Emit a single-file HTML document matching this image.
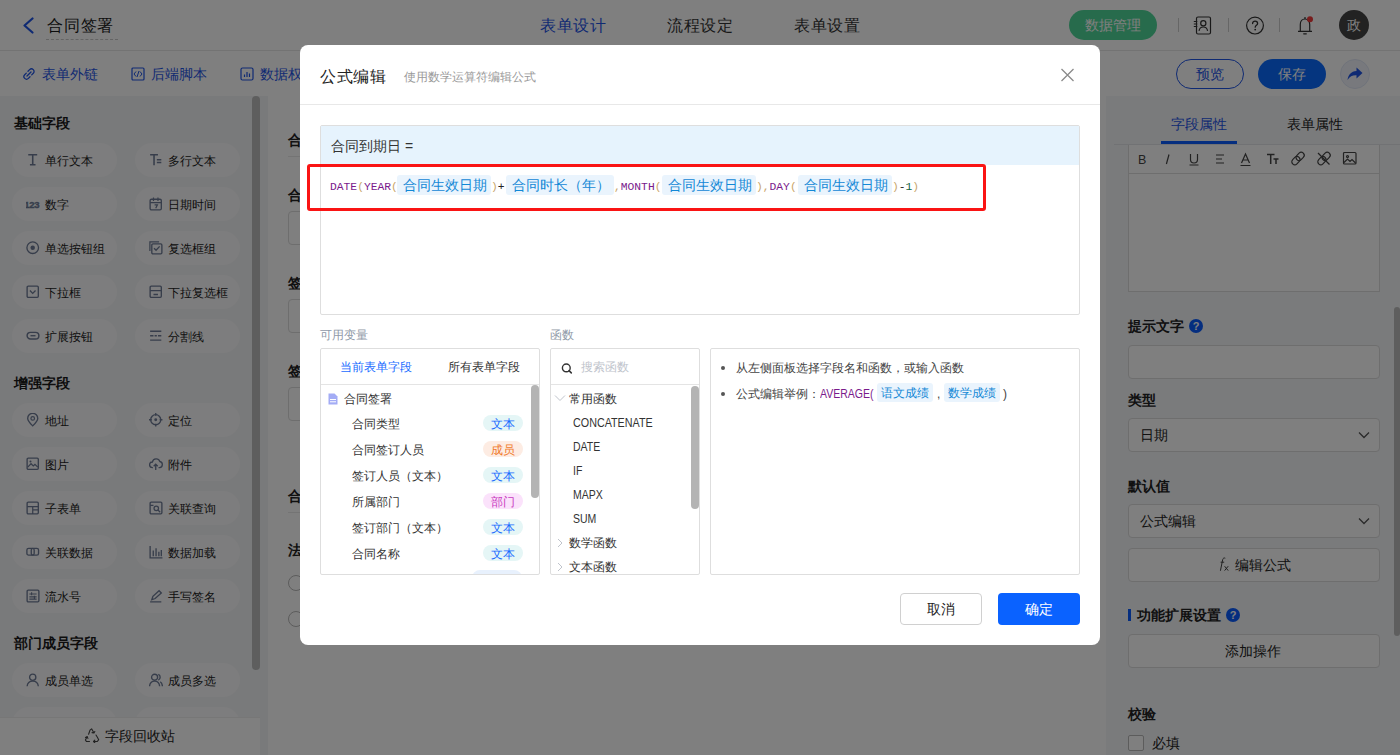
<!DOCTYPE html>
<html><head><meta charset="utf-8">
<style>
*{box-sizing:border-box;margin:0;padding:0}
html,body{width:1400px;height:755px;overflow:hidden;background:#fff}
body{position:relative;font-family:"Liberation Sans",sans-serif;color:#222;font-size:14px}
.a{position:absolute;white-space:nowrap}
svg{display:block}
/* background app */
#hdr{left:0;top:0;width:1400px;height:51px;background:#fff;border-bottom:1px solid #e6e6e6}
#tb{left:0;top:51px;width:1400px;height:45px;background:#fff}
#lp{left:0;top:96px;width:268px;height:659px;background:#f3f4f7}
#cv{left:268px;top:96px;width:838px;height:659px;background:#fff}
#rp{left:1106px;top:96px;width:294px;height:659px;background:#f4f6f9}
.sec{font-size:14px;font-weight:bold;color:#1a1a1a;line-height:20px}
.pill{width:105px;height:34px;border-radius:17px;background:#fbfbfc}
.pill .ic{position:absolute;left:14px;top:10px;width:14px;height:14px}
.pill .t{position:absolute;left:33px;top:9px;font-size:12px;line-height:18px;color:#222}
#mask{left:0;top:0;width:1400px;height:755px;background:rgba(0,0,0,.5)}
/* modal */
#modal{left:300px;top:45px;width:800px;height:600px;background:#fff;border-radius:8px}
.fn{color:#7a1a8c}.br{color:#c9a56a}.op{color:#222}.num{color:#116644}
.tag{height:20px;background:#eaf4fd;color:#1388d6;font-size:14px;line-height:20px;padding-left:6px;border-radius:3px}
.tag2{height:19px;background:#eaf4fd;color:#1388d6;font-size:12px;line-height:21px;text-align:center;border-radius:3px}
.badge{width:40px;height:16px;border-radius:8px;font-size:12px;line-height:18px;text-align:center}
.bt{background:#e5f6f6;color:#1a6cff}.bm{background:#fdece3;color:#f07a2a}.bd{background:#fbe2fb;color:#c93bc0}
</style></head>
<body>
<div id="hdr" class="a"></div>
<div id="tb" class="a"></div>
<div id="lp" class="a"></div>
<div id="cv" class="a"></div>
<div id="rp" class="a"></div>

<!-- header -->
<svg class="a" style="left:21px;top:17px" width="14" height="17" viewBox="0 0 14 17"><path d="M11.5 1.5 L3.5 8.5 L11.5 15.5" fill="none" stroke="#1f55e6" stroke-width="2.2" stroke-linecap="round" stroke-linejoin="round"/></svg>
<div class="a" style="left:47px;top:14px;font-size:16px;line-height:24px;color:#1a1a1a;letter-spacing:0.8px">合同签署</div>
<div class="a" style="left:46px;top:39px;width:72px;height:0;border-top:1px dashed #c8c8c8"></div>
<div class="a" style="left:540px;top:14px;font-size:16px;line-height:24px;color:#1f55e6;letter-spacing:0.5px">表单设计</div>
<div class="a" style="left:667px;top:14px;font-size:16px;line-height:24px;color:#333;letter-spacing:0.5px">流程设定</div>
<div class="a" style="left:794px;top:14px;font-size:16px;line-height:24px;color:#333;letter-spacing:0.5px">表单设置</div>
<div class="a" style="left:1069px;top:10px;width:88px;height:30px;border-radius:15px;background:#4fd699;color:#fff;font-size:14px;line-height:30px;text-align:center">数据管理</div>
<div class="a" style="left:1178px;top:18px;width:1px;height:14px;background:#ccc"></div>
<div class="a" style="left:1228px;top:18px;width:1px;height:14px;background:#ccc"></div>
<div class="a" style="left:1279px;top:18px;width:1px;height:14px;background:#ccc"></div>
<svg class="a" style="left:1192px;top:16px" width="20" height="19" viewBox="0 0 20 19"><rect x="4.5" y="1" width="14" height="17" rx="1.5" fill="none" stroke="#333" stroke-width="1.2"/><circle cx="11.3" cy="7.3" r="2.6" fill="none" stroke="#333" stroke-width="1.2"/><path d="M7 14.8c.5-2.6 2.1-3.8 4.3-3.8s3.8 1.2 4.3 3.8" fill="none" stroke="#333" stroke-width="1.2"/><path d="M1.8 5.5h3.5M1.8 8h3.5M1.8 10.5h3.5" stroke="#333" stroke-width="1.1"/></svg>
<svg class="a" style="left:1245px;top:16px" width="20" height="20" viewBox="0 0 20 20"><circle cx="10" cy="9.6" r="8.4" fill="none" stroke="#333" stroke-width="1.2"/><path d="M7.6 7.6c0-1.5 1.1-2.5 2.5-2.5s2.5 1 2.5 2.3c0 1.8-2.4 2-2.4 3.8" fill="none" stroke="#333" stroke-width="1.3" stroke-linecap="round"/><circle cx="10.2" cy="13.6" r="0.9" fill="#333"/></svg>
<svg class="a" style="left:1296px;top:15px" width="18" height="20" viewBox="0 0 18 20"><path d="M4.3 16V9.5C4.3 6.2 6.3 4 9 4s4.7 2.2 4.7 5.5V16M2 16.3h14" fill="none" stroke="#333" stroke-width="1.2" stroke-linejoin="round"/><path d="M7.7 18.8h2.6" stroke="#333" stroke-width="1.2" stroke-linecap="round"/><path d="M9 2v2" stroke="#333" stroke-width="1.2"/><circle cx="14" cy="4.3" r="3" fill="#f03a3a"/></svg>
<div class="a" style="left:1339px;top:10px;width:30px;height:30px;border-radius:15px;background:#444;color:#fff;font-size:14px;line-height:30px;text-align:center">政</div>

<!-- toolbar -->
<svg class="a" style="left:22px;top:67px" width="14" height="14" viewBox="0 0 14 14"><path d="M6 4.2l1.6-1.6a2.6 2.6 0 0 1 3.7 3.7L9.7 7.9M8 9.8l-1.6 1.6a2.6 2.6 0 0 1-3.7-3.7L4.3 6.1M5 9l4-4" fill="none" stroke="#1f55e6" stroke-width="1.3" stroke-linecap="round"/></svg>
<div class="a" style="left:42px;top:64px;font-size:14px;line-height:20px;color:#1f55e6">表单外链</div>
<svg class="a" style="left:131px;top:67px" width="14" height="14" viewBox="0 0 14 14"><rect x="1" y="1" width="12" height="12" rx="1" fill="none" stroke="#1f55e6" stroke-width="1.2"/><path d="M5 4.5L3 7l2 2.5M9 4.5L11 7 9 9.5M8 4L6 10" fill="none" stroke="#1f55e6" stroke-width="1"/></svg>
<div class="a" style="left:151px;top:64px;font-size:14px;line-height:20px;color:#1f55e6">后端脚本</div>
<svg class="a" style="left:240px;top:67px" width="14" height="14" viewBox="0 0 14 14"><rect x="1" y="1" width="12" height="12" rx="1.5" fill="none" stroke="#1f55e6" stroke-width="1.2"/><path d="M4.5 7.5v2.5M7 5v5M9.5 6.5v3.5" stroke="#1f55e6" stroke-width="1.2"/></svg>
<div class="a" style="left:260px;top:64px;font-size:14px;line-height:20px;color:#1f55e6">数据权限</div>
<div class="a" style="left:1176px;top:59px;width:68px;height:30px;border-radius:15px;border:1px solid #1f55e6;color:#1f55e6;font-size:14px;line-height:28px;text-align:center">预览</div>
<div class="a" style="left:1258px;top:59px;width:68px;height:30px;border-radius:15px;background:#0a6aff;color:#fff;font-size:14px;line-height:30px;text-align:center">保存</div>
<div class="a" style="left:1340px;top:59px;width:30px;height:30px;border-radius:15px;background:#f0f3fb;border:1px solid #e0e6f5"></div>
<svg class="a" style="left:1346px;top:66px" width="18" height="16" viewBox="0 0 18 16"><path d="M10.5 1.5L16.5 7l-6 5.5V9.2C6.5 9 4 10.3 1.5 14 2.2 8.6 5 5.4 10.5 4.9z" fill="#1f55e6"/></svg>



<!-- canvas form -->
<div class="a" style="left:288px;top:130px;font-size:14px;line-height:20px;font-weight:bold;color:#222">合同基本信息</div>
<div class="a" style="left:288px;top:156px;width:800px;height:1px;background:#e8e8e8"></div>
<div class="a" style="left:288px;top:185px;font-size:14px;line-height:20px;font-weight:bold;color:#222">合同名称</div>
<div class="a" style="left:288px;top:211px;width:790px;height:34px;border:1px solid #dcdcdc;border-radius:4px"></div>
<div class="a" style="left:288px;top:273px;font-size:14px;line-height:20px;font-weight:bold;color:#222">签订人员</div>
<div class="a" style="left:288px;top:299px;width:790px;height:34px;border:1px solid #dcdcdc;border-radius:4px"></div>
<div class="a" style="left:288px;top:361px;font-size:14px;line-height:20px;font-weight:bold;color:#222">签订部门</div>
<div class="a" style="left:288px;top:387px;width:790px;height:34px;border:1px solid #dcdcdc;border-radius:4px"></div>
<div class="a" style="left:288px;top:486px;font-size:14px;line-height:20px;font-weight:bold;color:#222">合同内容</div>
<div class="a" style="left:288px;top:512px;width:800px;height:1px;background:#e8e8e8"></div>
<div class="a" style="left:288px;top:540px;font-size:14px;line-height:20px;font-weight:bold;color:#222">法务审核</div>
<div class="a" style="left:288px;top:575px;width:16px;height:16px;border:1px solid #b8b8b8;border-radius:50%"></div>
<div class="a" style="left:288px;top:611px;width:16px;height:16px;border:1px solid #b8b8b8;border-radius:50%"></div>

<!-- right panel -->
<div class="a" style="left:1114px;top:144px;width:286px;height:1px;background:#e2e4e8"></div>
<div class="a" style="left:1171px;top:114px;font-size:14px;line-height:20px;color:#1f55e6">字段属性</div>
<div class="a" style="left:1161px;top:141px;width:76px;height:3px;background:#0a5cff"></div>
<div class="a" style="left:1287px;top:114px;font-size:14px;line-height:20px;color:#222">表单属性</div>
<div class="a" style="left:1128px;top:145px;width:252px;height:147px;border:1px solid #dcdcdc;border-top:none;border-radius:0;background:#fff"></div>
<div class="a" style="left:1129px;top:173px;width:250px;height:1px;background:#dcdcdc"></div>
<svg class="a" style="left:1132px;top:150px" width="240" height="18" viewBox="0 0 240 18">
<g fill="none" stroke="#444" stroke-width="1.2">
<text x="6" y="13.5" font-family="Liberation Sans" font-size="12.5" fill="#444" stroke="none">B</text>
<path d="M37 4.5l-2.6 9.5"/>
<path d="M58.5 4v5.5a3.5 3.5 0 0 0 7 0V4M57.5 15h9"/>
<path d="M84 5h8M84 9h6M84 13h8"/>
<path d="M109.5 13l4-9 4 9M111 10h5M108.5 15.5h10"/>
<path d="M135 4.5h7.5M138.7 4.5v9.5M141.5 9h5M144 9v5" stroke-width="1.5"/>
<g transform="rotate(-45 166 8.5)"><rect x="158.5" y="5.5" width="9" height="6" rx="3"/><rect x="164.5" y="5.5" width="9" height="6" rx="3"/></g>
<g transform="rotate(-45 192 8.5)"><rect x="184.5" y="5.5" width="9" height="6" rx="3"/><rect x="190.5" y="5.5" width="9" height="6" rx="3"/></g>
<path d="M186 3l11.5 11.5"/>
<rect x="211.5" y="2.5" width="12.5" height="11.5" rx="1"/><path d="M212 12.5l3.5-3.5 2.5 2.5 2-2 3.5 3.5"/><circle cx="215.5" cy="6.5" r="1"/>
</g></svg>
<div class="a" style="left:1128px;top:316px;font-size:14px;line-height:20px;font-weight:bold;color:#222">提示文字</div>
<div class="a" style="left:1189px;top:319px;width:14px;height:14px;border-radius:7px;background:#0a5cff;color:#fff;font-size:11px;line-height:14px;text-align:center;font-weight:bold">?</div>
<div class="a" style="left:1128px;top:345px;width:252px;height:34px;border:1px solid #dcdcdc;border-radius:4px;background:#fff"></div>
<div class="a" style="left:1128px;top:390px;font-size:14px;line-height:20px;font-weight:bold;color:#222">类型</div>
<div class="a" style="left:1128px;top:418px;width:252px;height:34px;border:1px solid #dcdcdc;border-radius:4px;background:#fff"></div>
<div class="a" style="left:1140px;top:425px;font-size:14px;line-height:20px;color:#222">日期</div>
<svg class="a" style="left:1358px;top:431px" width="12" height="8" viewBox="0 0 12 8"><path d="M1 1.5l5 5 5-5" fill="none" stroke="#555" stroke-width="1.3"/></svg>
<div class="a" style="left:1128px;top:476px;font-size:14px;line-height:20px;font-weight:bold;color:#222">默认值</div>
<div class="a" style="left:1128px;top:504px;width:252px;height:34px;border:1px solid #dcdcdc;border-radius:4px;background:#fff"></div>
<div class="a" style="left:1140px;top:511px;font-size:14px;line-height:20px;color:#222">公式编辑</div>
<svg class="a" style="left:1358px;top:517px" width="12" height="8" viewBox="0 0 12 8"><path d="M1 1.5l5 5 5-5" fill="none" stroke="#555" stroke-width="1.3"/></svg>
<div class="a" style="left:1128px;top:548px;width:252px;height:34px;border:1px solid #dcdcdc;border-radius:4px;background:#fff"></div>
<svg class="a" style="left:1217px;top:556px" width="14" height="16" viewBox="0 0 14 16"><path d="M8.3 2.2C7 1.6 6 2.2 5.7 3.6L3.4 14.8M3.6 6.2h3.6" fill="none" stroke="#444" stroke-width="1"/><path d="M7.6 10.2l3.6 4.4M11.2 10.2l-3.6 4.4" fill="none" stroke="#444" stroke-width="1"/></svg>
<div class="a" style="left:1235px;top:555px;font-size:14px;line-height:20px;color:#222">编辑公式</div>
<div class="a" style="left:1128px;top:609px;width:3px;height:12px;background:#0a5cff"></div>
<div class="a" style="left:1137px;top:605px;font-size:14px;line-height:20px;font-weight:bold;color:#222">功能扩展设置</div>
<div class="a" style="left:1226px;top:608px;width:14px;height:14px;border-radius:7px;background:#0a5cff;color:#fff;font-size:11px;line-height:14px;text-align:center;font-weight:bold">?</div>
<div class="a" style="left:1128px;top:634px;width:252px;height:34px;border:1px solid #dcdcdc;border-radius:4px;background:#fff"></div>
<div class="a" style="left:1225px;top:641px;font-size:14px;line-height:20px;color:#222">添加操作</div>
<div class="a" style="left:1128px;top:704px;font-size:14px;line-height:20px;font-weight:bold;color:#222">校验</div>
<div class="a" style="left:1128px;top:735px;width:16px;height:16px;border:1px solid #b8b8b8;border-radius:2px;background:#fff"></div>
<div class="a" style="left:1152px;top:733px;font-size:14px;line-height:20px;color:#222">必填</div>
<div class="a" style="left:1394px;top:307px;width:6px;height:329px;border-radius:3px;background:#bdbdbd"></div>

<!-- left panel -->
<div class="a sec" style="left:14px;top:113.2px">基础字段</div>
<div class="a pill" style="left:12px;top:143.0px"><div class="ic" style="left:14px"><svg width="14" height="14" viewBox="0 0 12.5 12.5"><path d="M2 1.5h8M6 1.5v9M3.5 10.5h5" stroke="#6e7b96" stroke-width="1.4" fill="none"/></svg></div><div class="t">单行文本</div></div>
<div class="a pill" style="left:135px;top:143.0px"><div class="ic" style="left:14px"><svg width="14" height="14" viewBox="0 0 12.5 12.5"><path d="M1 1.5h7M4.5 1.5v9.5M7 6h4M7 8.5h4" stroke="#6e7b96" stroke-width="1.4" fill="none"/></svg></div><div class="t">多行文本</div></div>
<div class="a pill" style="left:12px;top:187.0px"><div class="ic" style="left:14px"><svg width="14" height="14" viewBox="0 0 12.5 12.5"><text x="-1.5" y="9.5" font-size="8.5" font-weight="bold" font-family="Liberation Sans" fill="#6e7b96" stroke="#6e7b96" stroke-width="0.35" textLength="13.5">123</text></svg></div><div class="t">数字</div></div>
<div class="a pill" style="left:135px;top:187.0px"><div class="ic" style="left:14px"><svg width="14" height="14" viewBox="0 0 12.5 12.5"><rect x="1" y="2" width="10" height="9.5" rx="1.2" fill="none" stroke="#6e7b96" stroke-width="1.2"/><path d="M1 5h10M4 0.5v3M8 0.5v3M5 7h2.5l-1.5 3" stroke="#6e7b96" stroke-width="1.1" fill="none"/></svg></div><div class="t">日期时间</div></div>
<div class="a pill" style="left:12px;top:231.0px"><div class="ic" style="left:14px"><svg width="14" height="14" viewBox="0 0 12.5 12.5"><circle cx="6" cy="6" r="5.2" fill="none" stroke="#6e7b96" stroke-width="1.2"/><circle cx="6" cy="6" r="2" fill="#6e7b96"/></svg></div><div class="t">单选按钮组</div></div>
<div class="a pill" style="left:135px;top:231.0px"><div class="ic" style="left:14px"><svg width="14" height="14" viewBox="0 0 12.5 12.5"><rect x="2.5" y="2.5" width="9" height="9" rx="1" fill="none" stroke="#6e7b96" stroke-width="1.2"/><path d="M0.8 9V0.8H9" stroke="#6e7b96" stroke-width="1.1" fill="none"/><path d="M4.5 6.5l1.8 1.8 3.2-3.5" stroke="#6e7b96" stroke-width="1.2" fill="none"/></svg></div><div class="t">复选框组</div></div>
<div class="a pill" style="left:12px;top:275.0px"><div class="ic" style="left:14px"><svg width="14" height="14" viewBox="0 0 12.5 12.5"><rect x="1" y="1" width="10" height="10" rx="1" fill="none" stroke="#6e7b96" stroke-width="1.2"/><path d="M3.5 5l2.5 2.5L8.5 5" stroke="#6e7b96" stroke-width="1.2" fill="none"/></svg></div><div class="t">下拉框</div></div>
<div class="a pill" style="left:135px;top:275.0px"><div class="ic" style="left:14px"><svg width="14" height="14" viewBox="0 0 12.5 12.5"><rect x="1" y="1" width="10" height="10" rx="1" fill="none" stroke="#6e7b96" stroke-width="1.2"/><path d="M1 5h10M4 8.5h4" stroke="#6e7b96" stroke-width="1.2" fill="none"/></svg></div><div class="t">下拉复选框</div></div>
<div class="a pill" style="left:12px;top:319.0px"><div class="ic" style="left:14px"><svg width="14" height="14" viewBox="0 0 12.5 12.5"><rect x="1" y="3" width="10.5" height="6" rx="3" fill="none" stroke="#6e7b96" stroke-width="1.3"/><path d="M4 6h4.5" stroke="#6e7b96" stroke-width="1.2"/></svg></div><div class="t">扩展按钮</div></div>
<div class="a pill" style="left:135px;top:319.0px"><div class="ic" style="left:14px"><svg width="14" height="14" viewBox="0 0 12.5 12.5"><path d="M1 2h10M1 6h3M5 6h2M8 6h3M1 10h10" stroke="#6e7b96" stroke-width="1.2" fill="none"/></svg></div><div class="t">分割线</div></div>
<div class="a sec" style="left:14px;top:373.2px">增强字段</div>
<div class="a pill" style="left:12px;top:403.0px"><div class="ic" style="left:14px"><svg width="14" height="14" viewBox="0 0 12.5 12.5"><path d="M6 11.5C3 8.5 1.5 6.5 1.5 4.8A4.5 4.5 0 0 1 10.5 4.8C10.5 6.5 9 8.5 6 11.5z" fill="none" stroke="#6e7b96" stroke-width="1.2"/><circle cx="6" cy="4.8" r="1.6" fill="none" stroke="#6e7b96" stroke-width="1.1"/></svg></div><div class="t">地址</div></div>
<div class="a pill" style="left:135px;top:403.0px"><div class="ic" style="left:14px"><svg width="14" height="14" viewBox="0 0 12.5 12.5"><circle cx="6" cy="6" r="4.5" fill="none" stroke="#6e7b96" stroke-width="1.2"/><circle cx="6" cy="6" r="1.3" fill="#6e7b96"/><path d="M6 0v2.5M6 9.5V12M0 6h2.5M9.5 6H12" stroke="#6e7b96" stroke-width="1.2"/></svg></div><div class="t">定位</div></div>
<div class="a pill" style="left:12px;top:447.0px"><div class="ic" style="left:14px"><svg width="14" height="14" viewBox="0 0 12.5 12.5"><rect x="1" y="1" width="10" height="10" rx="1" fill="none" stroke="#6e7b96" stroke-width="1.2"/><path d="M1.5 9l3-3 2 2 1.5-1.5 2.5 2.5" stroke="#6e7b96" stroke-width="1.1" fill="none"/><circle cx="4" cy="4" r="0.9" fill="#6e7b96"/></svg></div><div class="t">图片</div></div>
<div class="a pill" style="left:135px;top:447.0px"><div class="ic" style="left:14px"><svg width="14" height="14" viewBox="0 0 12.5 12.5"><path d="M3.5 9.5H3A2.5 2.5 0 0 1 3 4.5 3.5 3.5 0 0 1 9.7 4a2.8 2.8 0 0 1-.2 5.5H8.5" fill="none" stroke="#6e7b96" stroke-width="1.2"/><path d="M6 11.5V6.5M4.2 8.2L6 6.4l1.8 1.8" stroke="#6e7b96" stroke-width="1.2" fill="none"/></svg></div><div class="t">附件</div></div>
<div class="a pill" style="left:12px;top:491.0px"><div class="ic" style="left:14px"><svg width="14" height="14" viewBox="0 0 12.5 12.5"><rect x="1" y="1" width="10" height="10.5" rx="1" fill="none" stroke="#6e7b96" stroke-width="1.2"/><path d="M1 5h10M6 5v6.5M6 8h5" stroke="#6e7b96" stroke-width="1.1" fill="none"/></svg></div><div class="t">子表单</div></div>
<div class="a pill" style="left:135px;top:491.0px"><div class="ic" style="left:14px"><svg width="14" height="14" viewBox="0 0 12.5 12.5"><rect x="1" y="1" width="10.5" height="10.5" rx="1" fill="none" stroke="#6e7b96" stroke-width="1.2"/><circle cx="6.5" cy="6.5" r="2" fill="none" stroke="#6e7b96" stroke-width="1.1"/><path d="M8 8l2 2M1 4h3" stroke="#6e7b96" stroke-width="1.1"/></svg></div><div class="t">关联查询</div></div>
<div class="a pill" style="left:12px;top:535.0px"><div class="ic" style="left:14px"><svg width="14" height="14" viewBox="0 0 12.5 12.5"><rect x="0.8" y="3" width="6.5" height="6" rx="1.5" fill="none" stroke="#6e7b96" stroke-width="1.2"/><rect x="4.7" y="3" width="6.5" height="6" rx="1.5" fill="none" stroke="#6e7b96" stroke-width="1.2"/></svg></div><div class="t">关联数据</div></div>
<div class="a pill" style="left:135px;top:535.0px"><div class="ic" style="left:14px"><svg width="14" height="14" viewBox="0 0 12.5 12.5"><path d="M1 1v10.5h11M3.8 5v5M6.3 3v7M8.8 6v4M11 4.5v5.5" stroke="#6e7b96" stroke-width="1.2" fill="none"/></svg></div><div class="t">数据加载</div></div>
<div class="a pill" style="left:12px;top:579.0px"><div class="ic" style="left:14px"><svg width="14" height="14" viewBox="0 0 12.5 12.5"><rect x="1" y="1" width="10.5" height="10.5" rx="1" fill="none" stroke="#6e7b96" stroke-width="1.2"/><path d="M3 4.5h6.5M3 7h6.5M3 9h6.5M5 3v2.5M7.5 6v3" stroke="#6e7b96" stroke-width="1" fill="none"/></svg></div><div class="t">流水号</div></div>
<div class="a pill" style="left:135px;top:579.0px"><div class="ic" style="left:14px"><svg width="14" height="14" viewBox="0 0 12.5 12.5"><path d="M2.5 9.5l1-3L9 1.5l2 2-5.5 5z M1 11.5h10" stroke="#6e7b96" stroke-width="1.2" fill="none"/></svg></div><div class="t">手写签名</div></div>
<div class="a sec" style="left:14px;top:633.2px">部门成员字段</div>
<div class="a pill" style="left:12px;top:663.0px"><div class="ic" style="left:14px"><svg width="14" height="14" viewBox="0 0 12.5 12.5"><circle cx="6" cy="3.8" r="2.8" fill="none" stroke="#6e7b96" stroke-width="1.2"/><path d="M1 11.8C1.3 8.6 3.3 7.2 6 7.2s4.7 1.4 5 4.6" fill="none" stroke="#6e7b96" stroke-width="1.2"/></svg></div><div class="t">成员单选</div></div>
<div class="a pill" style="left:135px;top:663.0px"><div class="ic" style="left:14px"><svg width="14" height="14" viewBox="0 0 12.5 12.5"><circle cx="5" cy="3.8" r="2.7" fill="none" stroke="#6e7b96" stroke-width="1.2"/><path d="M0.5 11.8C.8 8.6 2.5 7.2 5 7.2s4.2 1.4 4.5 4.6M8.3 1.3a2.7 2.7 0 0 1 0 5M10 7.8c1.2.6 1.8 2 2 4" fill="none" stroke="#6e7b96" stroke-width="1.2"/></svg></div><div class="t">成员多选</div></div>
<div class="a pill" style="left:12px;top:707.0px"><div class="ic" style="left:14px"><svg width="14" height="14" viewBox="0 0 12.5 12.5"><circle cx="6" cy="3.8" r="2.8" fill="none" stroke="#6e7b96" stroke-width="1.2"/><path d="M1 11.8C1.3 8.6 3.3 7.2 6 7.2s4.7 1.4 5 4.6" fill="none" stroke="#6e7b96" stroke-width="1.2"/></svg></div><div class="t">部门单选</div></div>
<div class="a pill" style="left:135px;top:707.0px"><div class="ic" style="left:14px"><svg width="14" height="14" viewBox="0 0 12.5 12.5"><circle cx="5" cy="3.8" r="2.7" fill="none" stroke="#6e7b96" stroke-width="1.2"/><path d="M0.5 11.8C.8 8.6 2.5 7.2 5 7.2s4.2 1.4 4.5 4.6M8.3 1.3a2.7 2.7 0 0 1 0 5M10 7.8c1.2.6 1.8 2 2 4" fill="none" stroke="#6e7b96" stroke-width="1.2"/></svg></div><div class="t">部门多选</div></div>
<div class="a" style="left:252px;top:96px;width:8px;height:574px;border-radius:4px;background:#bdbdbd"></div>
<div class="a" style="left:0;top:717px;width:260px;height:38px;background:#fff;border-top:1px solid #eee"></div>
<svg class="a" style="left:84px;top:728px" width="16" height="15" viewBox="0 0 16 15"><path d="M6 2.2L7.6 0.8 10 5M10.8 3.6 10 5 8 4.6M13.5 9.5l1.2 2.2-1.4 1.8H9.5M10.8 14.7 9.5 13.5l1.3-1.3M5.5 13.5H2.4l-1-1.6L3.2 8.6M1.5 9.4l1.7-.8.7 1.8M4.6 6.2 6 2.2M12 7l1.5 2.5" fill="none" stroke="#444" stroke-width="1.1" stroke-linecap="round" stroke-linejoin="round"/></svg>
<div class="a" style="left:105px;top:726px;font-size:14px;line-height:20px;color:#222">字段回收站</div>
<div id="mask" class="a"></div>
<div id="modal" class="a"></div>

<!-- modal content -->
<div class="a" style="left:320px;top:65px;font-size:16px;line-height:24px;color:#222;letter-spacing:0.5px">公式编辑</div>
<div class="a" style="left:404px;top:67px;font-size:12px;line-height:20px;color:#9a9a9a">使用数学运算符编辑公式</div>
<svg class="a" style="left:1060px;top:68px" width="15" height="14" viewBox="0 0 15 14"><path d="M1.5 1l12 12M13.5 1l-12 12" stroke="#8a8a8a" stroke-width="1.3"/></svg>
<div class="a" style="left:300px;top:104px;width:800px;height:1px;background:#e8e8e8"></div>

<div class="a" style="left:320px;top:125px;width:760px;height:190px;border:1px solid #dedede;border-radius:2px"></div>
<div class="a" style="left:321px;top:126px;width:758px;height:39px;background:#e6f3fd"></div>
<div class="a" style="left:331px;top:136px;font-size:14px;line-height:20px;color:#333">合同到期日 =</div>
<div class="a" style="left:307px;top:164px;width:679px;height:47px;border:3px solid #fa1414;border-radius:3px"></div>
<div class="a mono" style="left:330px;top:177.5px;font-family:'Liberation Mono',monospace;font-size:11.3px;line-height:18px"><span class="fn">DATE</span><span class="br">(</span><span class="fn">YEAR</span><span class="br">(</span></div>
<div class="a tag" style="left:397px;top:175px;width:94px">合同生效日期</div>
<div class="a mono" style="left:491px;top:177.5px;font-family:'Liberation Mono',monospace;font-size:11.3px;line-height:18px"><span class="br">)</span><span class="op">+</span></div>
<div class="a tag" style="left:506px;top:175px;width:108px">合同时长（年）</div>
<div class="a mono" style="left:614px;top:177.5px;font-family:'Liberation Mono',monospace;font-size:11.3px;line-height:18px"><span class="br">,</span><span class="fn">MONTH</span><span class="br">(</span></div>
<div class="a tag" style="left:662px;top:175px;width:94px">合同生效日期</div>
<div class="a mono" style="left:756px;top:177.5px;font-family:'Liberation Mono',monospace;font-size:11.3px;line-height:18px"><span class="br">),</span><span class="fn">DAY</span><span class="br">(</span></div>
<div class="a tag" style="left:798px;top:175px;width:94px">合同生效日期</div>
<div class="a mono" style="left:892px;top:177.5px;font-family:'Liberation Mono',monospace;font-size:11.3px;line-height:18px"><span class="br">)</span><span class="op">-</span><span class="num">1</span><span class="br">)</span></div>

<div class="a" style="left:320px;top:324.5px;font-size:12px;line-height:20px;color:#8f99a8">可用变量</div>
<div class="a" style="left:550px;top:324.5px;font-size:12px;line-height:20px;color:#8f99a8">函数</div>

<div class="a" style="left:320px;top:348px;width:220px;height:227px;border:1px solid #dedede;border-radius:2px"></div>
<div class="a" style="left:340px;top:357px;font-size:12px;line-height:20px;color:#1a6cff">当前表单字段</div>
<div class="a" style="left:448px;top:357px;font-size:12px;line-height:20px;color:#333">所有表单字段</div>
<div class="a" style="left:321px;top:384px;width:218px;height:1px;background:#e4e4e4"></div>
<svg class="a" style="left:327px;top:393px" width="12" height="12" viewBox="0 0 12 12"><path d="M1.5 0.5h6l3 3v8h-9z" fill="#a3acf5"/><path d="M3 6.5h6M3 8.8h6" stroke="#fff" stroke-width="1"/></svg>
<div class="a" style="left:344px;top:389px;font-size:12px;line-height:20px;color:#333">合同签署</div>
<div class="a" style="left:352px;top:414px;font-size:12px;line-height:20px;color:#333">合同类型</div>
<div class="a badge bt" style="left:483px;top:415px">文本</div>
<div class="a" style="left:352px;top:440px;font-size:12px;line-height:20px;color:#333">合同签订人员</div>
<div class="a badge bm" style="left:483px;top:441px">成员</div>
<div class="a" style="left:352px;top:466px;font-size:12px;line-height:20px;color:#333">签订人员（文本）</div>
<div class="a badge bt" style="left:483px;top:467px">文本</div>
<div class="a" style="left:352px;top:492px;font-size:12px;line-height:20px;color:#333">所属部门</div>
<div class="a badge bd" style="left:483px;top:493px">部门</div>
<div class="a" style="left:352px;top:518px;font-size:12px;line-height:20px;color:#333">签订部门（文本）</div>
<div class="a badge bt" style="left:483px;top:519px">文本</div>
<div class="a" style="left:352px;top:544px;font-size:12px;line-height:20px;color:#333">合同名称</div>
<div class="a badge bt" style="left:483px;top:545px">文本</div>
<div class="a" style="left:321px;top:570px;width:218px;height:4px;overflow:hidden"><div class="a" style="left:151px;top:0;width:50px;height:16px;border-radius:8px;background:#e8f1fd"></div></div>
<div class="a" style="left:531px;top:385px;width:8px;height:113px;border-radius:4px;background:#b4b4b4"></div>

<div class="a" style="left:550px;top:348px;width:150px;height:227px;border:1px solid #dedede;border-radius:2px"></div>
<svg class="a" style="left:561px;top:363px" width="13" height="11" viewBox="0 0 13 11"><circle cx="5.3" cy="4.9" r="3.9" fill="none" stroke="#333" stroke-width="1.4"/><path d="M8 7.6l2.3 2.3" stroke="#333" stroke-width="1.5" stroke-linecap="round"/></svg>
<div class="a" style="left:581px;top:357px;font-size:12px;line-height:20px;color:#c0c4cc">搜索函数</div>
<div class="a" style="left:551px;top:384px;width:148px;height:1px;background:#e4e4e4"></div>
<svg class="a" style="left:554px;top:394px" width="12" height="8" viewBox="0 0 12 8"><path d="M1 1.5l5 5 5-5" fill="none" stroke="#c0c4cc" stroke-width="1"/></svg>
<div class="a" style="left:569px;top:389px;font-size:12px;line-height:20px;color:#333">常用函数</div>
<div class="a" style="left:573px;top:413px;font-size:12.5px;line-height:20px;color:#333;transform:scaleX(0.86);transform-origin:0 0">CONCATENATE</div>
<div class="a" style="left:573px;top:437px;font-size:12.5px;line-height:20px;color:#333;transform:scaleX(0.84);transform-origin:0 0">DATE</div>
<div class="a" style="left:573px;top:461px;font-size:12.5px;line-height:20px;color:#333;transform:scaleX(0.84);transform-origin:0 0">IF</div>
<div class="a" style="left:573px;top:485px;font-size:12.5px;line-height:20px;color:#333;transform:scaleX(0.84);transform-origin:0 0">MAPX</div>
<div class="a" style="left:573px;top:509px;font-size:12.5px;line-height:20px;color:#333;transform:scaleX(0.84);transform-origin:0 0">SUM</div>
<svg class="a" style="left:557px;top:538px" width="6" height="10" viewBox="0 0 6 10"><path d="M1 1l4 4-4 4" fill="none" stroke="#c0c4cc" stroke-width="1"/></svg>
<div class="a" style="left:569px;top:533px;font-size:12px;line-height:20px;color:#333">数学函数</div>
<div class="a" style="left:551px;top:549px;width:148px;height:25px;overflow:hidden">
<svg class="a" style="left:6px;top:13px" width="6" height="10" viewBox="0 0 6 10"><path d="M1 1l4 4-4 4" fill="none" stroke="#c0c4cc" stroke-width="1"/></svg>
<div class="a" style="left:18px;top:8px;font-size:12px;line-height:20px;color:#333">文本函数</div></div>
<div class="a" style="left:691px;top:386px;width:8px;height:123px;border-radius:4px;background:#b4b4b4"></div>

<div class="a" style="left:710px;top:348px;width:370px;height:227px;border:1px solid #dedede;border-radius:2px"></div>
<div class="a" style="left:721px;top:366px;width:4px;height:4px;border-radius:2px;background:#555"></div>
<div class="a" style="left:736px;top:358px;font-size:12px;line-height:20px;color:#444">从左侧面板选择字段名和函数，或输入函数</div>
<div class="a" style="left:721px;top:392px;width:4px;height:4px;border-radius:2px;background:#555"></div>
<div class="a" style="left:736px;top:384px;font-size:12px;line-height:20px;color:#444">公式编辑举例：</div>
<div class="a" style="left:820px;top:384px;font-size:12.5px;line-height:20px;color:#7a1a8c;transform:scaleX(0.84);transform-origin:0 0">AVERAGE(</div>
<div class="a tag2" style="left:877px;top:383px;width:56px">语文成绩</div>
<div class="a" style="left:937px;top:384px;font-size:12px;line-height:20px;color:#444">,</div>
<div class="a tag2" style="left:944px;top:383px;width:56px">数学成绩</div>
<div class="a" style="left:1003px;top:384px;font-size:12px;line-height:20px;color:#444">)</div>

<div class="a" style="left:900px;top:593px;width:82px;height:32px;border:1px solid #d0d0d0;border-radius:4px;color:#222;font-size:14px;line-height:30px;text-align:center">取消</div>
<div class="a" style="left:998px;top:593px;width:82px;height:32px;border-radius:4px;background:#0a62ff;color:#fff;font-size:14px;line-height:32px;text-align:center">确定</div>
</body></html>
